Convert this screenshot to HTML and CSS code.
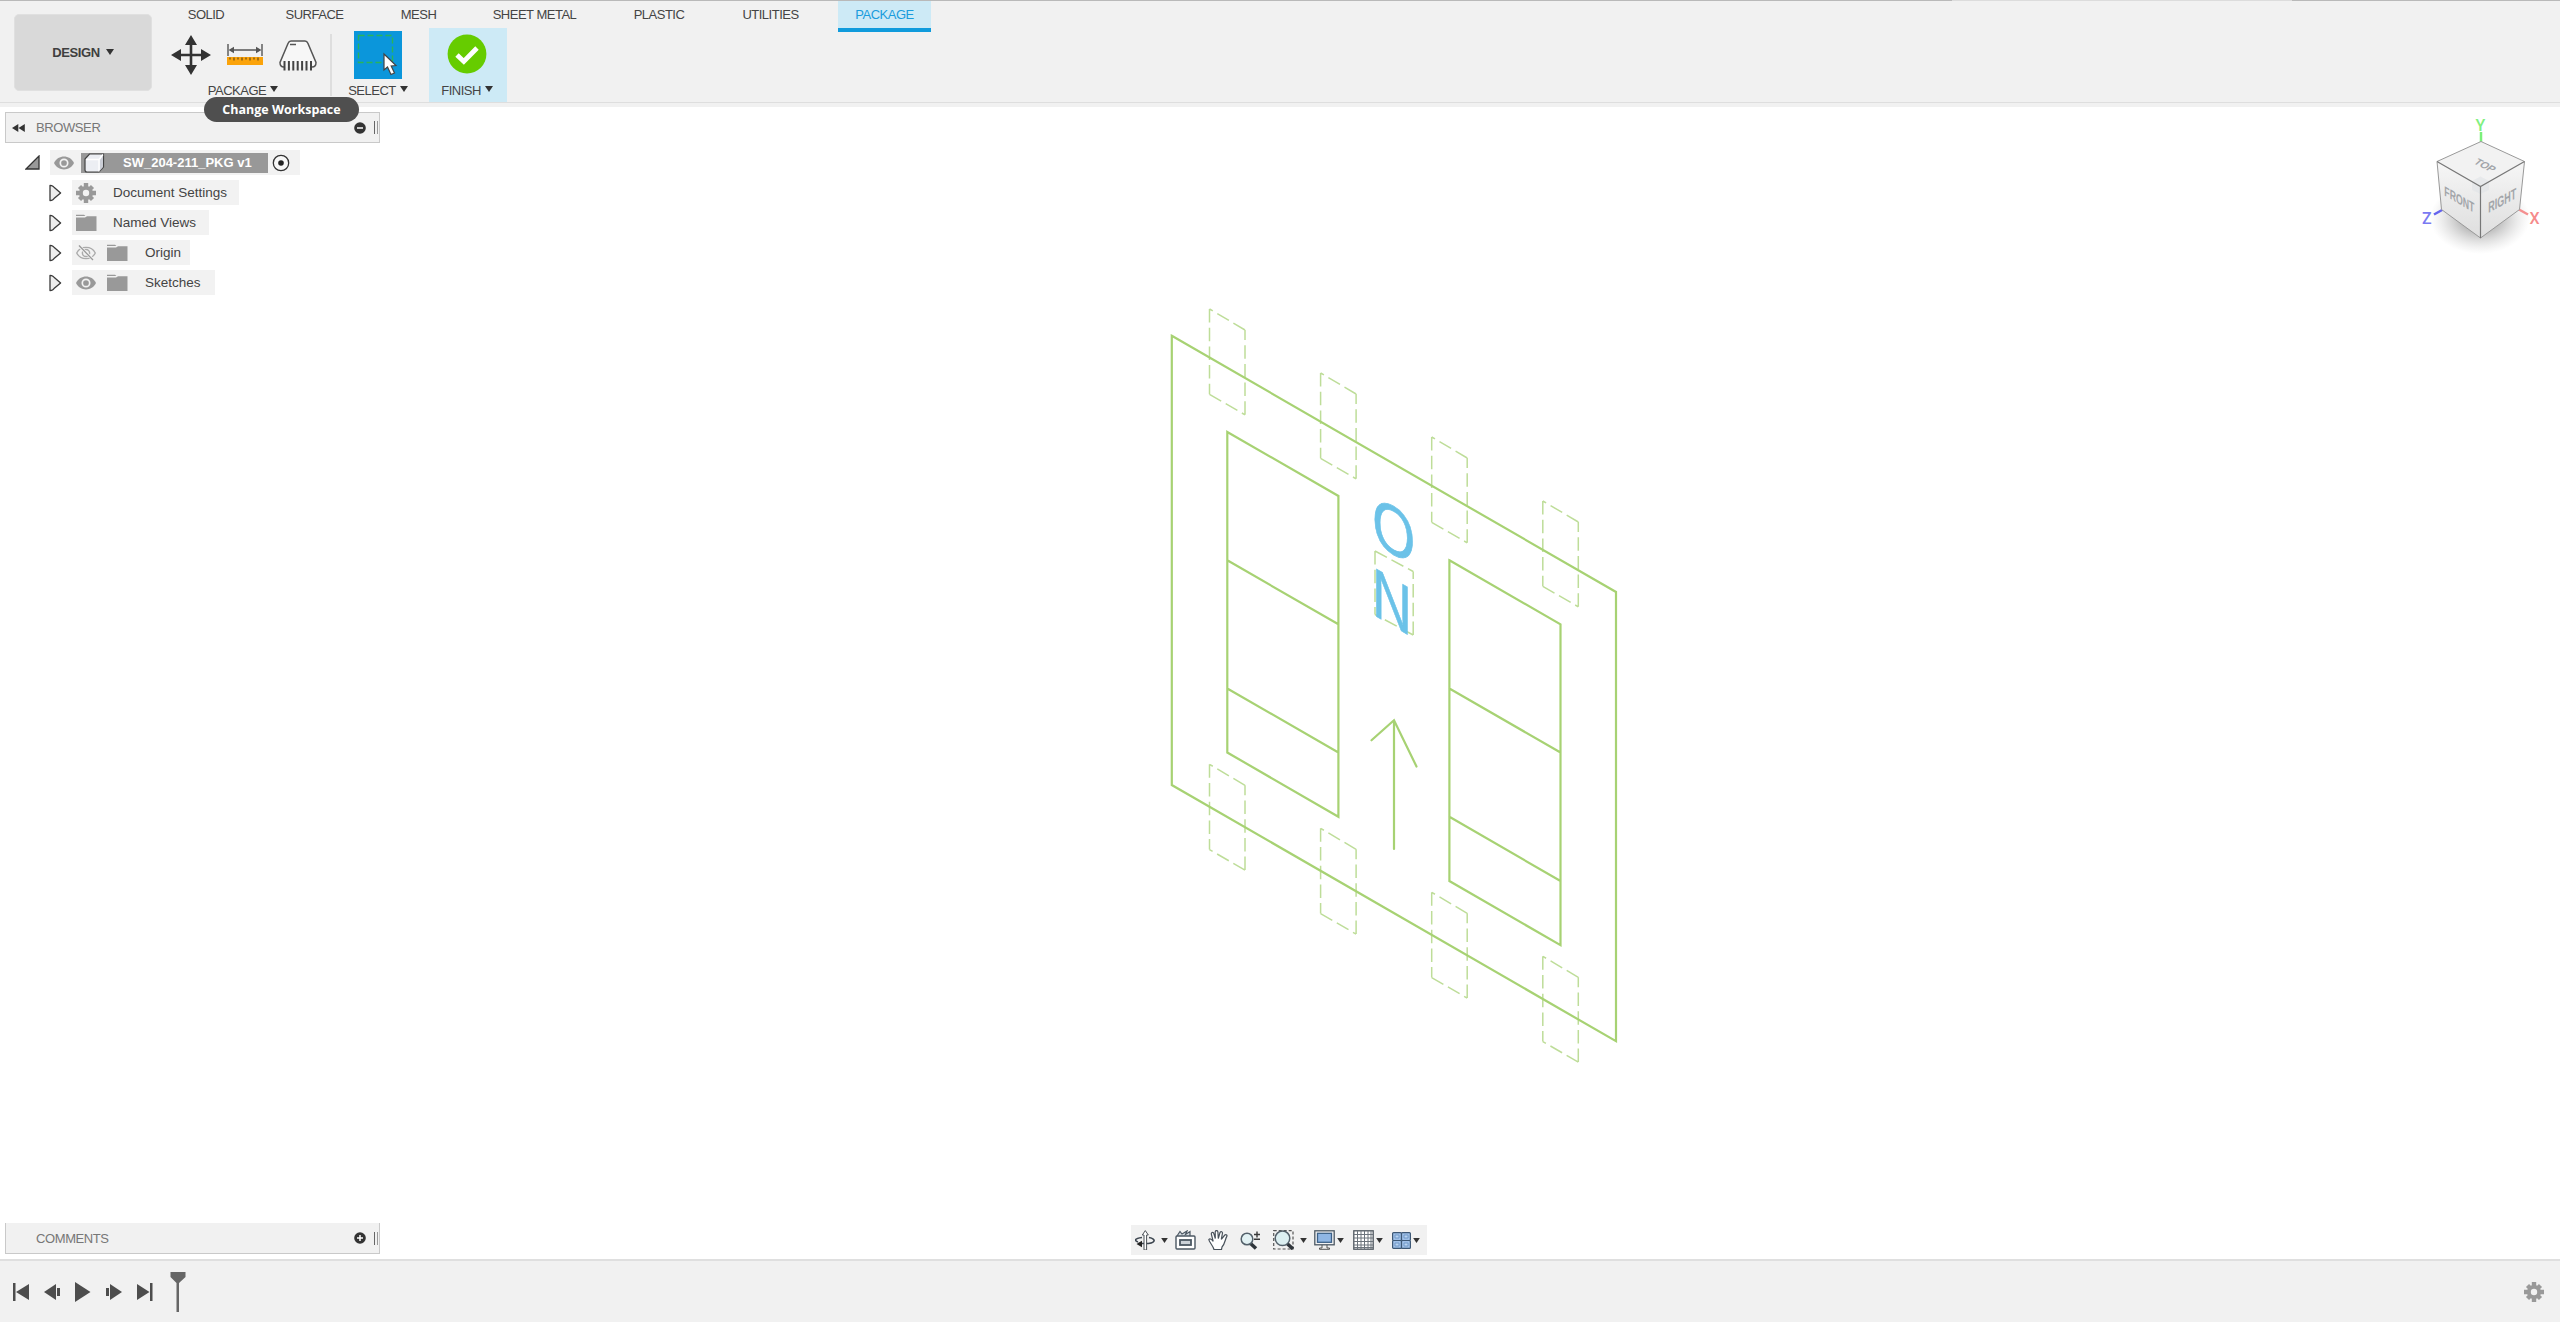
FILE: index.html
```html
<!DOCTYPE html>
<html lang="en">
<head>
<meta charset="utf-8">
<title>SW_204-211_PKG v1</title>
<link rel="stylesheet" href="styles.css">
</head>
<body>
<svg class="defs" aria-hidden="true">
  <defs>
    <symbol id="caret" viewBox="0 0 8 6"><path d="M0 0H8L4 6z" fill="#333"/></symbol>
    <symbol id="twist" viewBox="0 0 13 18"><path d="M1 1.5V16.5L2.6 16.4Q4 16 5 14.6L11.6 9 5 3.2Q4 2 2.6 1.6z" fill="#ededed" stroke="#3a3a3a" stroke-width="1.3" stroke-linejoin="round"/></symbol>
    <symbol id="folder" viewBox="0 0 21 17"><path d="M0 0.8H8L9.5 2H0zM0 5.2V3.6H9L11 2.2H20.5V17H0z" fill="#999"/></symbol>
    <symbol id="eye" viewBox="0 0 20 14"><path d="M0 7C4-1.6 16-1.6 20 7 16 15.6 4 15.6 0 7z" fill="#999"/><circle cx="10" cy="7" r="3.7" fill="none" stroke="#f2f2f2" stroke-width="1.7"/></symbol>
    <symbol id="eye-off" viewBox="0 0 20 16"><path d="M.7 8C4.5.5 15.500.5 19.300 8 15.500 15.500 4.500 15.500.7 8z" fill="none" stroke="#aaa" stroke-width="1.3"/><circle cx="10" cy="8" r="3.600" fill="none" stroke="#aaa" stroke-width="1.500"/><path d="M3 1L18 15.500" stroke="#f2f2f2" stroke-width="3"/><path d="M3 .5L17 15" stroke="#999" stroke-width="1.300"/></symbol>
    <symbol id="gear" viewBox="-10 -10 20 20"><path d="M0-10V10M-10 0H10M-6.500-6.500L6.500 6.500M6.500-6.500L-6.500 6.500" stroke="#999" stroke-width="4.400"/><circle r="7" fill="#999"/><circle r="3.200" fill="#f2f2f2"/></symbol>
    <path id="pad-a" d="M35.500 105.800V21M35.500 21L0 0M0 0V85.300M0 85.300L35.500 105.800"/>
    <path id="pad-b" d="M35.500 105.800V21M35.500 21L0 0M0 0V85.300M35.500 105.800L0 85.300"/>
  </defs>
</svg>

<div class="app">
  <header class="toolbar">
    <div class="topline"><i></i><i></i><i></i></div>
    <button class="workspace">DESIGN <svg class="caret"><use href="#caret"/></svg></button>
    <div class="ribbon">
      <nav class="tabs">
        <span class="tab">SOLID</span><span class="tab">SURFACE</span><span class="tab">MESH</span><span class="tab">SHEET METAL</span><span class="tab">PLASTIC</span><span class="tab">UTILITIES</span><span class="tab active">PACKAGE</span>
      </nav>
      <div class="tools">
        <div class="group package">
          <div class="icons">
            <svg width="40" height="40" viewBox="0 0 40 40"><path d="M20 8V32M8 20H32" stroke="#333" stroke-width="2.600"/><path d="M20 0L26 10H14zM20 40L26 30H14zM0 20L10 14V26zM40 20L30 14V26z" fill="#333"/></svg>
            <svg width="36" height="22" viewBox="0 0 36 22"><path d="M1 0V12M35 0V12M4 6H32" stroke="#555" stroke-width="1.400"/><path d="M1.500 6L7 2.800V9.200zM34.500 6L29 2.800V9.200z" fill="#555"/><rect y="13" width="36" height="8" fill="#fba30a"/><path d="M3 13.500v2M7 13.500v3M11 13.500v2M15 13.500v3M19 13.500v2M23 13.500v3M27 13.500v2M31 13.500v3" stroke="#6b4c14" stroke-width="1.200"/></svg>
            <svg width="38" height="31" viewBox="0 0 38 31"><path d="M5 27Q1 27 1 22.500L9 3.500Q10 1 12 1H26Q28 1 29 3.500L37 22.500Q37 27 33 27" fill="#f7f7f7" stroke="#555" stroke-width="1.500"/><path d="M11 4.500H17" stroke="#555" stroke-width="1.500"/><path d="M5.500 21v9.500M9.900 21v9.500M14.300 21v9.500M18.700 21v9.500M23.100 21v9.500M27.500 21v9.500M32 21v9.500" stroke="#444" stroke-width="2"/></svg>
          </div>
          <span class="label">PACKAGE <svg class="caret"><use href="#caret"/></svg></span>
        </div>
        <div class="rule"></div>
        <div class="group select">
          <svg class="tile" width="48" height="48" viewBox="0 0 48 48"><rect width="48" height="48" fill="#0b96db"/><rect x="4.500" y="4.500" width="34" height="27" fill="none" stroke="#29b45b" stroke-width="1.400" stroke-dasharray="6 3"/><path d="M30 23V39L33.500 36 37 43.500 40.500 42 37.200 35 42 34.500z" fill="#fff" stroke="#444" stroke-width="1.200"/></svg>
          <span class="label">SELECT <svg class="caret"><use href="#caret"/></svg></span>
        </div>
        <div class="group finish">
          <svg class="check" width="40" height="40" viewBox="0 0 40 40"><circle cx="20" cy="20" r="19.400" fill="#66cc00"/><path d="M10 21L16.800 27.500 30 14" fill="none" stroke="#fff" stroke-width="4.800"/></svg>
          <span class="label">FINISH <svg class="caret"><use href="#caret"/></svg></span>
        </div>
      </div>
    </div>
    <div class="tooltip">Change Workspace</div>
  </header>

  <main class="stage">
    <svg class="sketch" width="2560" height="1152" viewBox="0 107 2560 1152">
      <g class="dashed">
        <use href="#pad-a" x="1209.500" y="309"/><use href="#pad-a" x="1320.600" y="373"/><use href="#pad-a" x="1431.700" y="437"/><use href="#pad-a" x="1542.800" y="501"/>
        <use href="#pad-b" x="1209.500" y="764.300"/><use href="#pad-a" x="1320.600" y="828.300"/><use href="#pad-a" x="1431.700" y="892.300"/><use href="#pad-b" x="1542.800" y="956.300"/>
        <path d="M1375 551V614.500M1375 551L1413.200 571.500M1413.200 635V571.500M1413.200 635L1375 614.500"/>
      </g>
      <g class="solid">
        <path d="M1171.800 335.800L1616 592V1041.200L1171.800 785z"/>
        <path d="M1227.300 432L1338.400 496V816.800L1227.300 752.500zM1227.300 560.300L1338.400 624.300M1227.300 688.500L1338.400 752.500"/>
        <path d="M1449.400 560.300L1560.500 624.300V945.200L1449.400 881zM1449.400 688.500L1560.500 752.500M1449.400 816.800L1560.500 881"/>
        <path d="M1394 849V720.300M1371.500 740.300L1394 720.300 1416.500 766.500"/>
      </g>
      <g class="marking">
        <text transform="matrix(.8 .462 0 1 1372.200 542)">O</text>
        <text transform="matrix(.8 .462 0 1 1371.900 614)">N</text>
      </g>
    </svg>

    <svg class="viewcube" width="160" height="160" viewBox="0 0 160 160">
      <defs>
        <radialGradient id="shade"><stop offset=".3" stop-color="#999" stop-opacity=".8"/><stop offset="1" stop-color="#ccc" stop-opacity="0"/></radialGradient>
        <linearGradient id="face" x1="0" y1="0" x2="0" y2="1"><stop offset="0" stop-color="#f6f6f6"/><stop offset="1" stop-color="#dedede"/></linearGradient>
      </defs>
      <ellipse cx="80" cy="118" rx="50" ry="36" fill="url(#shade)"/>
      <path d="M81 42V32" stroke="#7bf07b" stroke-width="2.500"/><path d="M43 109.500L34 114.500" stroke="#6464ee" stroke-width="2.500"/><path d="M119 109.500L128 114.500" stroke="#f49090" stroke-width="2.500"/>
      <path d="M37 61.500L80.500 86.500V138L41.500 109.500z" fill="url(#face)"/><path d="M124.500 61.500L80.500 86.500V138L119.500 109.500z" fill="url(#face)"/><path d="M81 41.500L124.500 61.500 80.500 86.500 37 61.500z" fill="#f2f2f2"/>
      <path d="M72 81l8.500-4.500 8.500 4.500v9l-8.500 4-8.500-4z" fill="#dfe2e6" opacity=".55"/>
      <path d="M81 41.500L124.500 61.500 119.500 109.500 80.500 138 41.500 109.500 37 61.500z" fill="none" stroke="#999" stroke-width="1"/><path d="M37 61.500L80.500 86.500 124.500 61.500M80.500 86.500V138" fill="none" stroke="#777" stroke-width="1.200"/>
      <g class="face-label"><text transform="matrix(.76 .44 0 1.200 44.300 95.500)">FRONT</text><text transform="matrix(.78 -.42 0 1.300 88.300 113)">RIGHT</text><text transform="matrix(.8 .42 -.7 .62 73 63)">TOP</text></g>
      <g class="axis"><text x="75.500" y="31" fill="#80f080">Y</text><text x="22" y="124" fill="#7a7af2">Z</text><text x="129.500" y="124" fill="#f68b8b">X</text></g>
    </svg>

    <div class="sidebar">
      <section class="panel">
        <svg class="collapse" viewBox="0 0 13 8"><path d="M6.300 0V8L0 4zM12.800 0V8L6.500 4z" fill="#333"/></svg>
        <span class="title">BROWSER</span>
        <svg class="dot" viewBox="-6 -6 12 12"><circle r="5.800" fill="#333"/><path d="M-3 0H3" stroke="#fff" stroke-width="1.500"/></svg>
        <i class="grip"></i>
      </section>
      <ul class="tree">
        <li class="root">
          <svg class="open" viewBox="0 0 15 15"><path d="M1 14L14 1V14z" fill="#999" stroke="#333" stroke-width="1.300"/></svg>
          <div class="chip">
            <svg class="eye"><use href="#eye"/></svg>
            <span class="name"><svg class="cube" viewBox="0 0 21 20"><path d="M1 6L5.500 1H19.500V14L15 19H3Q1 19 1 17z" fill="#eceef3" stroke="#444" stroke-width="1.200"/><path d="M2 6.500H15V18.500M15 6.500L19 1.500" stroke="#fff" stroke-width="1.300" fill="none"/><path d="M16 7L19 3V14L16 17.500z" fill="#cbced6"/></svg>SW_204-211_PKG v1</span>
            <svg class="radio" viewBox="-9 -9 18 18"><circle r="7.700" fill="#f7f7f7" stroke="#333" stroke-width="1.300"/><circle r="2.800" fill="#222"/></svg>
          </div>
        </li>
        <li><svg class="twist"><use href="#twist"/></svg><div class="chip w-doc"><svg class="gear"><use href="#gear"/></svg><span>Document Settings</span></div></li>
        <li><svg class="twist"><use href="#twist"/></svg><div class="chip w-views"><svg class="folder"><use href="#folder"/></svg><span>Named Views</span></div></li>
        <li><svg class="twist"><use href="#twist"/></svg><div class="chip w-origin"><svg class="eye off"><use href="#eye-off"/></svg><svg class="folder"><use href="#folder"/></svg><span>Origin</span></div></li>
        <li><svg class="twist"><use href="#twist"/></svg><div class="chip w-sketch"><svg class="eye"><use href="#eye"/></svg><svg class="folder"><use href="#folder"/></svg><span>Sketches</span></div></li>
      </ul>
      <section class="panel comments">
        <span class="title">COMMENTS</span>
        <svg class="dot" viewBox="-6 -6 12 12"><circle r="5.800" fill="#333"/><path d="M-3 0H3M0-3V3" stroke="#fff" stroke-width="1.500"/></svg>
        <i class="grip"></i>
      </section>
    </div>

    <div class="navbar">
      <svg class="orbit" viewBox="0 0 20 20"><path d="M14 7.500C22 9 20.500 13.500 10 13.500H3" fill="none" stroke="#3d4650" stroke-width="1.600"/><path d="M7 7.500C-.5 8.500-1 10.500 3 12" fill="none" stroke="#3d4650" stroke-width="1.600"/><path d="M1.500 14L7 10.800V17.200z" fill="#222"/><path d="M9 20V5H7.300L10.300 .6 13.300 5H11.600V20z" fill="#fff" stroke="#4b5157"/></svg>
      <svg class="caret"><use href="#caret"/></svg>
      <svg class="look" viewBox="0 0 21 20"><path d="M2 6L5 1.500 7 4 12 1 10.500 4.500 15 1.500V6" fill="#d5dbe0" stroke="#4c5863" stroke-width="1.200"/><rect x="1" y="6" width="19" height="13" rx="1" fill="#fff" stroke="#4c5863" stroke-width="1.400"/><rect x="5" y="10" width="11" height="5" fill="#ccd2d8" stroke="#4c5863" stroke-width="1.800"/></svg>
      <svg class="hand" viewBox="0 0 20 20"><path d="M6 19.500C5 15.500 1 12 .8 9.500 2 8 4 9.500 5.200 11.300L3.300 4C3.300 1.800 5.500 2 6 4L7.300 8.500 7.200 2C7.500 0 9.600 .1 9.900 2L10.300 8.500 12 2.500C13 .8 14.800 1.800 14.400 3.500L13.300 9.300 16.800 5C18.300 4 19.500 5.300 18.700 6.600C17 9.500 17 14 14 17L13.500 19.500z" fill="#fff" stroke="#48515a" stroke-width="1.200"/></svg>
      <svg class="zoom" viewBox="0 0 21 20"><path d="M10 13L16 18.500" stroke="#2f353b" stroke-width="3.500"/><circle cx="7" cy="9" r="5.800" fill="#e2f1f3" stroke="#53606a" stroke-width="1.500"/><path d="M14 4.500H20M17 1.500V7.500M14 9.200H20" stroke="#3a3a3a" stroke-width="1.400"/></svg>
      <svg class="fit" viewBox="0 0 21 20"><path d="M.7 .7H20V19H.7z" fill="none" stroke="#555" stroke-width="1.200" stroke-dasharray="3 2"/><path d="M13.500 13L20 19" stroke="#2f353b" stroke-width="3.500"/><circle cx="9.500" cy="8.300" r="7.300" fill="#dceff1" stroke="#53606a" stroke-width="1.500"/></svg>
      <svg class="caret"><use href="#caret"/></svg>
      <svg class="display" viewBox="0 0 21 20"><path d="M8 14V18H5.500V19.300H15.500V18H13V14" fill="#eee" stroke="#555"/><rect x=".8" y=".8" width="19.400" height="14" fill="#f3f3f3" stroke="#4d5964" stroke-width="1.300"/><rect x="3.500" y="3.300" width="14" height="9" fill="#8fb6e4" stroke="#3c6188" stroke-width="1.300"/></svg>
      <svg class="caret"><use href="#caret"/></svg>
      <svg class="grid" viewBox="0 0 21 20"><rect x=".8" y=".8" width="19.400" height="18.400" fill="#fff" stroke="#4e565e" stroke-width="1.300"/><path d="M4.500 1V19M8 1V19M11.500 1V19M15 1V19M18 1V19M1 4.500H20M1 8H20M1 11.500H20M1 15H20M1 17.500H20" stroke="#6c747c" stroke-width="1"/></svg>
      <svg class="caret"><use href="#caret"/></svg>
      <svg class="views" viewBox="0 0 19 17"><g fill="#9fc0e8" stroke="#3d5876" stroke-width="1.200"><rect x=".6" y=".6" width="8.900" height="7.900" rx="1"/><rect x="9.500" y=".6" width="8.900" height="7.900" rx="1"/><rect x=".6" y="8.500" width="8.900" height="7.900" rx="1"/><rect x="9.500" y="8.500" width="8.900" height="7.900" rx="1"/></g><path d="M3 3h4v3H3zM12 3h4v3h-4zM3 11h4v3H3zM12 11h4v3h-4z" fill="#b9d3f1" stroke="#6b94c4" stroke-width=".9"/></svg>
      <svg class="caret"><use href="#caret"/></svg>
    </div>
  </main>

  <footer class="timeline">
    <div class="transport">
      <svg width="16" height="18" viewBox="0 0 16 18"><path d="M0 0H2.500V18H0zM16 1V17L3 9z"/></svg>
      <svg width="16" height="18" viewBox="0 0 16 18"><path d="M12 1V17L0 9zM13 5H16V13H13z"/></svg>
      <svg width="16" height="20" viewBox="0 0 16 20"><path d="M0 0V20L15.500 10z"/></svg>
      <svg width="16" height="18" viewBox="0 0 16 18"><path d="M4 1V17L16 9zM0 5H3V13H0z"/></svg>
      <svg width="16" height="18" viewBox="0 0 16 18"><path d="M0 1V17L12.500 9zM13 0H15.500V18H13z"/></svg>
      <svg class="marker" width="16" height="40" viewBox="0 0 16 40"><path d="M.5 0H15.500V5L9 11V40H6.500V11L.5 5z" fill="#666"/></svg>
    </div>
    <svg class="gear"><use href="#gear"/></svg>
  </footer>
</div>
</body>
</html>
```
FILE: styles.css
```css
* { box-sizing: border-box; }
body {
  margin: 0;
  background: #fff;
  color: #444;
  font-family: "Liberation Sans", Arial, sans-serif;
  font-size: 13px;
}
svg { display: block; flex: none; }
.defs { position: absolute; width: 0; height: 0; }
.app { display: flex; flex-direction: column; width: 2560px; height: 1322px; overflow: hidden; }
.caret { width: 8px; height: 6px; }

/* toolbar */
.toolbar {
  position: relative;
  z-index: 2;
  display: flex;
  height: 107px;
  flex: none;
  background: linear-gradient(#f1f1f1 102px, #dedede 102px, #dedede 103px, #f1f1f1 103px);
}
.topline { position: absolute; inset: 0 0 auto; display: flex; height: 1px; background: #dcdcdc; }
.topline i:nth-child(1) { width: 1952px; background: #b9b9b9; }
.topline i:nth-child(2) { width: 340px; }
.topline i:nth-child(3) { flex: 1; background: #b9b9b9; }
.workspace {
  display: flex;
  align-items: center;
  justify-content: center;
  gap: 6px;
  width: 138px;
  height: 77px;
  margin: 14px 7px 0 14px;
  padding: 0 0 1px;
  border: 1px solid #e0e0e0;
  border-radius: 5px;
  background: #d9d9d9;
  color: #3f3f3f;
  font: bold 13px "Liberation Sans", Arial, sans-serif;
  letter-spacing: -0.4px;
}
.ribbon { display: flex; flex-direction: column; }
.tabs {
  display: grid;
  grid-template-columns: 94px 123px 85px 147px 102px 121px 93px;
  height: 32px;
}
.tab { padding-top: 7px; line-height: 16px; text-align: center; letter-spacing: -0.5px; }
.tab.active {
  height: 32px;
  margin-left: 7px;
  margin-right: -7px;
  border-bottom: 4px solid #109bdc;
  background: #cdeaf6;
  color: #1a9cdd;
}
.tools { display: flex; margin-top: -4px; height: 74px; }
.group { display: flex; flex-direction: column; align-items: center; }
.label {
  display: flex;
  align-items: center;
  gap: 4px;
  height: 16px;
  margin-top: auto;
  margin-bottom: 4px;
  letter-spacing: -0.5px;
}
.label .caret { margin-top: -2px; }
.package { width: 172px; }
.package .icons { display: flex; align-items: center; gap: 16px; margin: 7px 0 0 -3px; }
.package .label { margin-left: -4px; }
.rule { width: 2px; height: 62px; margin-top: 6px; margin-left: -1px; background: #dedede; }
.select { width: 97px; padding-right: 5px; }
.select .tile { margin-top: 3px; }
.finish { width: 78px; padding-right: 2px; background: #cdeaf6; }
.finish .check { margin-top: 6px; }
.tooltip {
  position: absolute;
  left: 204px;
  top: 97px;
  width: 155px;
  height: 25px;
  border-radius: 12.5px;
  background: #4f4f4f;
  color: #fff;
  font: bold 12.5px/25px "Open Sans", sans-serif;
  text-align: center;
}

/* canvas */
.stage { position: relative; display: flex; flex: 1; min-height: 0; }
.sketch { position: absolute; inset: 0; }
.solid path { fill: none; stroke: #a7d273; stroke-width: 2.2; stroke-linecap: round; }
.dashed { fill: none; stroke: #bedd99; stroke-width: 1.5; stroke-dasharray: 13.5 5.2; }
.marking { fill: #6bc2e8; stroke: #6bc2e8; stroke-width: 0.7; font-size: 69px; }
.viewcube { position: absolute; right: 0; top: -7px; }
.face-label { font-size: 11.5px; font-weight: bold; fill: #a2a5a9; }
.axis { font-size: 16px; }
.axis text { font-family: Roboto, sans-serif; font-weight: 500; }

/* sidebar */
.sidebar { position: relative; display: flex; flex-direction: column; width: 380px; padding: 5px 0 5px 5px; }
.panel {
  display: flex;
  align-items: center;
  height: 31px;
  flex: none;
  padding-left: 6px;
  border: 1px solid #c9c9c9;
  background: #f1f1f1;
  color: #777;
}
.collapse { width: 13px; height: 8px; }
.title { margin-left: 11px; letter-spacing: -0.4px; }
.dot { width: 12px; height: 12px; margin-left: auto; }
.grip { width: 4px; height: 13px; margin: 0 1px 0 8px; border-left: 1px solid #666; border-right: 1px solid #999; }
.comments { margin-top: auto; border-top: 0; }
.comments .title { margin-left: 24px; }
.tree { list-style: none; margin: 7px 0 0; padding: 0; }
.tree li { display: flex; align-items: center; height: 25px; margin-bottom: 5px; padding-left: 44px; font-size: 13.5px; }
.tree .root { padding-left: 20px; height: 25px; }
.chip { display: flex; align-items: center; height: 25px; margin-left: 10px; padding-left: 4px; background: #f2f2f2; }
.chip span { margin-left: 17px; white-space: nowrap; }
.open { width: 15px; height: 15px; }
.root .chip { width: 250px; margin-left: 10px; }
.root .chip .name {
  display: flex;
  align-items: center;
  gap: 18px;
  width: 187px;
  height: 20px;
  margin: 0 4px 0 7px;
  padding-left: 3px;
  background: #989898;
  color: #fff;
  font-weight: bold;
  font-size: 13px;
}
.cube { width: 21px; height: 20px; }
.radio { width: 18px; height: 18px; }
.twist { width: 13px; height: 18px; }
.eye { width: 20px; height: 14px; }
.eye.off { height: 16px; }
.gear { width: 20px; height: 20px; }
.folder { width: 21px; height: 17px; }
.eye + .folder { margin-left: 11px; }
.w-doc { width: 167px; }
.w-views { width: 137px; }
.w-views span { margin-left: 16px; }
.w-origin { width: 118px; }
.w-sketch { width: 143px; }

/* view controls */
.navbar {
  position: relative;
  align-self: flex-end;
  display: flex;
  align-items: center;
  width: 296px;
  height: 30px;
  margin: 0 0 4px 751px;
  padding-left: 4px;
  background: #f1f1f1;
}
.navbar svg { height: 20px; width: 21px; }
.navbar .caret { width: 7px; height: 5px; margin-left: 2px; }
.navbar .orbit { width: 20px; }
.navbar .orbit + .caret { margin-left: 6px; }
.navbar .look { margin-left: 7px; }
.navbar .hand { width: 20px; margin-left: 12px; }
.navbar .zoom { margin-left: 12px; }
.navbar .fit { margin-left: 12px; }
.navbar .fit + .caret { margin-left: 6px; }
.navbar .display { margin-left: 7px; }
.navbar .grid { margin-left: 9px; }
.navbar .views { width: 19px; height: 17px; margin-left: 9px; }

/* timeline */
.timeline {
  display: flex;
  justify-content: space-between;
  align-items: center;
  height: 63px;
  flex: none;
  padding: 0 16px 0 13px;
  border-top: 2px solid #dfdfdf;
  background: #f1f1f1;
}
.transport { display: flex; align-items: center; gap: 15px; fill: #4d4d4d; }
.transport .marker { margin-left: 2px; }
```
